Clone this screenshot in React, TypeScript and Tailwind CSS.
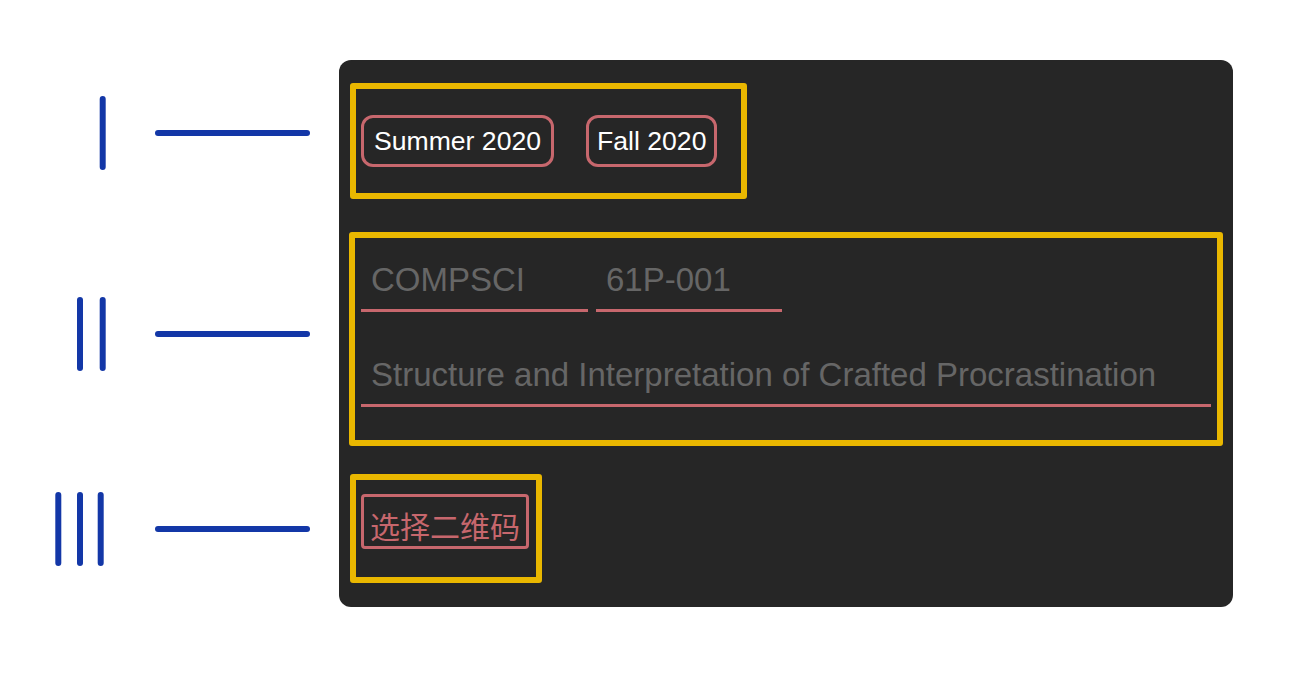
import React from 'react';

// Roman numeral markers next to each section of the card
const Marker: React.FC<{ bars: number[]; className?: string }> = ({ bars, className = '' }) => (
  <svg width="320" height="80" viewBox="0 0 320 80" className={`block ${className}`}>
    <g stroke="#1337a7" strokeWidth={6} strokeLinecap="round" fill="none">
      {bars.map((x) => (
        <line key={x} x1={x} y1={6} x2={x} y2={74} />
      ))}
      <line x1={158} y1={40} x2={307} y2={40} />
    </g>
  </svg>
);

const App: React.FC = () => {
  return (
    <div
      className="w-[1304px] h-[690px] bg-white flex items-start pt-[60px]"
      style={{ fontFamily: '"Liberation Sans", Arial, "Noto Sans CJK SC", sans-serif' }}
    >
      {/* left annotations */}
      <div className="w-[339px] shrink-0 flex flex-col pt-[33px]">
        <Marker bars={[102.7]} />
        <Marker bars={[80, 102.7]} className="mt-[121px]" />
        <Marker bars={[58.3, 80, 100.7]} className="mt-[115px]" />
      </div>

      {/* card */}
      <div className="w-[894px] h-[547px] bg-[#262626] rounded-xl pt-[23px] px-[10px] flex flex-col items-start">
        {/* I: term pills */}
        <div className="ml-[1px] h-[116px] border-[6px] border-[#e9b700] rounded-[3px] flex items-center gap-[32px] pl-[5px] pr-[24px]">
          <button className="h-[52px] px-[10px] border-[3px] border-[#c7676d] rounded-[12px] text-white text-[26.6px] leading-[30px]">
            Summer 2020
          </button>
          <button className="h-[52px] px-[8px] border-[3px] border-[#c7676d] rounded-[12px] text-white text-[26.6px] leading-[30px]">
            Fall 2020
          </button>
        </div>

        {/* II: course inputs */}
        <div className="mt-[33px] w-[874px] h-[214px] border-[6px] border-[#e9b700] rounded-[3px] pt-[13px] px-[6px] flex flex-col gap-[34px]">
          <div className="flex gap-[8px]">
            <input
              placeholder="COMPSCI"
              className="w-[227px] bg-transparent outline-none border-b-[3px] border-[#c7676d] py-[10px] pl-[10px] text-[33px] leading-[38px] text-[#d0d0d0] placeholder:text-[#666666]"
            />
            <input
              placeholder="61P-001"
              className="w-[186px] bg-transparent outline-none border-b-[3px] border-[#c7676d] py-[10px] pl-[10px] text-[33px] leading-[38px] text-[#d0d0d0] placeholder:text-[#666666]"
            />
          </div>
          <input
            placeholder="Structure and Interpretation of Crafted Procrastination"
            className="w-full bg-transparent outline-none border-b-[3px] border-[#c7676d] py-[10px] pl-[10px] text-[33px] leading-[38px] text-[#d0d0d0] placeholder:text-[#666666]"
          />
        </div>

        {/* III: QR code picker */}
        <div className="ml-[1px] mt-[28px] h-[109px] border-[6px] border-[#e9b700] rounded-[3px] flex items-start pt-[14px] pl-[5px] pr-[7px]">
          <button
            className="h-[55px] px-[6px] pt-[6px] pb-0 border-[3px] border-[#c7676d] rounded-[4px] text-[#c7676d] text-[30px] leading-[40px]"
            style={{ fontFamily: '"Noto Sans CJK SC", "Noto Sans", sans-serif' }}
          >
            选择二维码
          </button>
        </div>
      </div>
    </div>
  );
};

export default App;
